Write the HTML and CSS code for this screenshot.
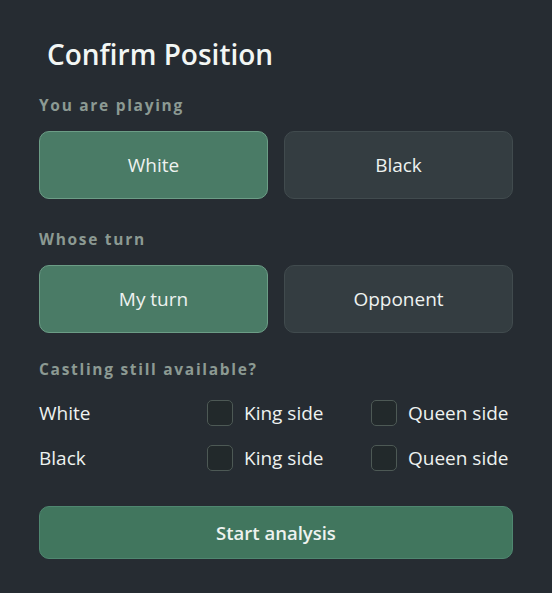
FILE: index.html
```html
<!DOCTYPE html>
<html>
<head>
<meta charset="utf-8">
<link rel="stylesheet" href="styles.css">
</head>
<body>
<div class="panel">
  <h1 class="title">Confirm Position</h1>

  <div class="section-label label-first">You are playing</div>
  <div class="choice-row">
    <button class="choice active">White</button>
    <button class="choice">Black</button>
  </div>

  <div class="section-label label-mid">Whose turn</div>
  <div class="choice-row">
    <button class="choice active">My turn</button>
    <button class="choice">Opponent</button>
  </div>

  <div class="section-label label-castle">Castling still available?</div>
  <div class="castle-grid">
    <div class="castle-name">White</div>
    <label class="check"><span class="box"></span>King side</label>
    <label class="check"><span class="box"></span>Queen side</label>
    <div class="castle-name">Black</div>
    <label class="check"><span class="box"></span>King side</label>
    <label class="check"><span class="box"></span>Queen side</label>
  </div>

  <button class="start">Start analysis</button>
</div>
</body>
</html>
```

FILE: styles.css
```css
html, body {
  margin: 0;
  padding: 0;
  background: #262c32;
}

body {
  font-family: "Open Sans", "Noto Sans", sans-serif;
  color: #eef2f0;
  width: 552px;
  height: 593px;
  overflow: hidden;
}

.panel {
  padding: 36px 39px 0 39px;
  display: flex;
  flex-direction: column;
}

.title {
  margin: 0 0 0 8px;
  font-size: 28px;
  font-weight: 600;
  line-height: 36px;
  color: #f2f6f4;
}

.section-label {
  font-size: 15.5px;
  font-weight: 700;
  letter-spacing: 1.7px;
  line-height: 20px;
  color: #8c9a93;
}

.label-first { margin-top: 23px; }
.label-mid { margin-top: 30px; }
.label-castle { margin-top: 26px; }

.choice-row {
  margin-top: 16px;
  display: grid;
  grid-template-columns: 1fr 1fr;
  gap: 16px;
}

.choice {
  height: 68px;
  border-radius: 10px;
  border: 1.5px solid #414b4e;
  background: #343d41;
  color: #eef2f0;
  font-family: inherit;
  font-size: 19px;
  font-weight: 400;
  padding: 0;
}

.choice.active {
  background: #4a7b66;
  border-color: #6c9d86;
}

.castle-grid {
  margin-top: 21px;
  display: grid;
  grid-template-columns: 168px 164px 1fr;
  row-gap: 19px;
  align-items: center;
}

.castle-name {
  font-size: 19px;
  line-height: 26px;
}

.check {
  display: flex;
  align-items: center;
  gap: 11px;
  font-size: 19px;
  line-height: 26px;
}

.box {
  width: 24px;
  height: 24px;
  border: 1.5px solid #4d5955;
  border-radius: 5px;
  background: #22292b;
  flex: none;
}

.start {
  margin-top: 35px;
  height: 53px;
  border-radius: 10px;
  border: 1.5px solid #4f8770;
  background: #41765e;
  color: #eef2f0;
  font-family: inherit;
  font-size: 18.5px;
  font-weight: 600;
  padding: 0;
}
```
